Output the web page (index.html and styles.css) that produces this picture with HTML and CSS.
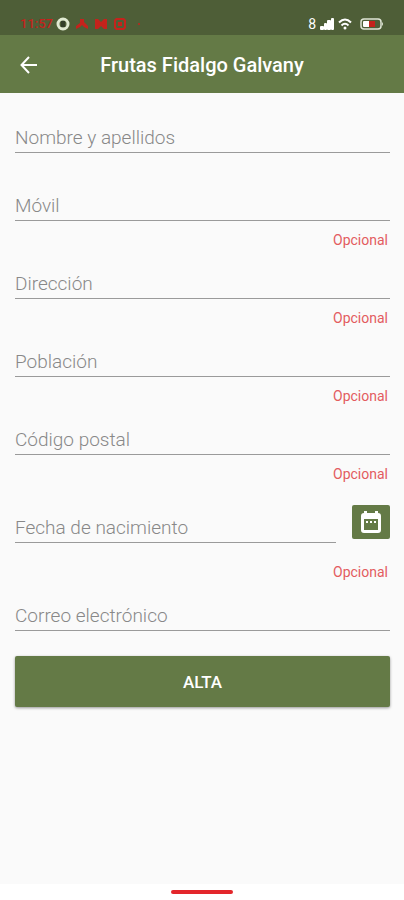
FILE: index.html
```html
<!DOCTYPE html>
<html lang="es">
  <head>
    <meta charset="utf-8">
    <meta name="viewport" content="width=device-width, initial-scale=1">
    <title>Frutas Fidalgo Galvany</title>
    <link rel="stylesheet" href="styles.css">
  </head>
  <body>
    <div class="statusbar">
      <div class="status-left">
        <span class="clock">11:57</span>
        <svg width="14" height="14" viewBox="0 0 14 14">
          <circle cx="7" cy="7" r="5" fill="#4e5e37" stroke="#e0ead2" stroke-width="3"/>
          <rect x="5" y="4" width="4" height="6" fill="#34402a"/>
        </svg>
        <svg class="red-icon" width="14" height="12" viewBox="0 0 14 12">
          <path d="M5 1h4v3l4 4v3l-4-2-2-2-2 2-4 2V8l4-3z"/>
        </svg>
        <svg class="red-icon" width="14" height="12" viewBox="0 0 14 12">
          <path d="M1 1h3l3 3 3-3h3v10h-3L7 8l-3 3H1z"/>
        </svg>
        <svg class="red-icon" width="14" height="12" viewBox="0 0 14 12">
          <path fill-rule="evenodd" d="M3 0h8l2 2v8l-2 2H3l-2-2V2zM4 2L3 3v6l1 1h6l1-1V3l-1-1zM5 4h4v4H5z"/>
        </svg>
        <svg class="red-icon" width="14" height="12" viewBox="0 0 14 12">
          <circle cx="7" cy="6" r="1"/>
        </svg>
      </div>
      <div class="status-right">
        <span class="network">8</span>
        <svg width="14" height="12" viewBox="0 0 14 12" fill="#fff">
          <rect x="0" y="8" width="4" height="4" rx="1"/>
          <rect x="4" y="5" width="3" height="7" rx="1"/>
          <rect x="7" y="2" width="4" height="10" rx="1"/>
          <rect x="11" y="0" width="3" height="12" rx="1"/>
        </svg>
        <svg width="14" height="12" viewBox="0 0 14 12" fill="none" stroke="#fff" stroke-width="2">
          <path d="M1 4.500Q7-1.500 13 4.500M3.500 7.500Q7 4 10.500 7.500"/>
          <circle cx="7" cy="10" r="1.500" fill="#fff" stroke="none"/>
        </svg>
        <svg class="battery" width="24" height="12" viewBox="0 0 24 12">
          <rect x="1" y="1" width="20" height="10" rx="3" fill="none" stroke="#dfe5d6" stroke-width="1.500"/>
          <path d="M22 4q2 2 0 4z" fill="#dfe5d6"/>
          <rect x="3" y="3" width="7" height="6" rx="1" fill="#fff"/>
          <rect x="9" y="3" width="6" height="6" fill="#c4231c"/>
        </svg>
      </div>
    </div>

    <header class="appbar">
      <button class="back" type="button" aria-label="Atrás">
        <svg width="18" height="18" viewBox="0 0 18 18" fill="none" stroke="#fff" stroke-width="2">
          <path d="M17 9H2M9 1L1.500 9 9 17"/>
        </svg>
      </button>
      <h1 class="title">Frutas Fidalgo Galvany</h1>
    </header>

    <main class="content">
      <form class="form">
        <div class="field field-required">
          <input class="input" type="text" id="nombre" placeholder="Nombre y apellidos" aria-label="Nombre y apellidos">
        </div>
        <div class="field">
          <input class="input" type="tel" id="movil" placeholder="Móvil" aria-label="Móvil">
          <span class="note">Opcional</span>
        </div>
        <div class="field">
          <input class="input" type="text" id="direccion" placeholder="Dirección" aria-label="Dirección">
          <span class="note">Opcional</span>
        </div>
        <div class="field">
          <input class="input" type="text" id="poblacion" placeholder="Población" aria-label="Población">
          <span class="note">Opcional</span>
        </div>
        <div class="field">
          <input class="input" type="text" id="postal" placeholder="Código postal" aria-label="Código postal">
          <span class="note">Opcional</span>
        </div>
        <div class="field field-date">
          <div class="date-row">
            <input class="input" type="text" id="fecha" placeholder="Fecha de nacimiento" aria-label="Fecha de nacimiento">
            <button class="calendar" type="button" aria-label="Elegir fecha">
              <svg width="20" height="22" viewBox="0 0 20 22">
                <path fill="#fff" fill-rule="evenodd" d="M3 0h3v2h8V0h3v2q3 0 3 3v14q0 3-3 3H3q-3 0-3-3V5q0-3 3-3zM3 8v11h14V8z"/>
                <path fill="#fff" d="M5 10h2v2H5zM9 10h2v2H9zM13 10h2v2h-2z"/>
              </svg>
            </button>
          </div>
          <span class="note">Opcional</span>
        </div>
        <div class="field">
          <input class="input" type="email" id="correo" placeholder="Correo electrónico" aria-label="Correo electrónico">
        </div>
        <button class="submit" type="submit">ALTA</button>
      </form>
    </main>

    <div class="navbar">
      <div class="handle"></div>
    </div>
  </body>
</html>
```

FILE: styles.css
```css
* {
  box-sizing: border-box;
}
body {
  margin: 0;
  min-height: 100vh;
  display: flex;
  flex-direction: column;
  font-family: Roboto, sans-serif;
  background-color: #fafafa;
}
svg {
  display: block;
}
.statusbar {
  height: 35px;
  padding: 12px 20px 0 20px;
  display: flex;
  align-items: center;
  justify-content: space-between;
  background-color: #4e5e37;
}
.status-left {
  display: flex;
  align-items: center;
  gap: 5px;
}
.clock {
  width: 31px;
  font-size: 13px;
  line-height: 16px;
  font-weight: 500;
  color: #c4231c;
}
.red-icon {
  fill: #c4231c;
}
.status-right {
  display: flex;
  align-items: center;
  gap: 4px;
}
.network {
  font-size: 14px;
  line-height: 16px;
  color: #fff;
}
.battery {
  margin-left: 4px;
}
.appbar {
  height: 58px;
  padding: 2px 16px 0;
  display: grid;
  grid-template-columns: 28px 1fr 28px;
  align-items: center;
  background-color: #647a46;
}
.back {
  padding: 4px;
  border: none;
  background: none;
}
.title {
  margin: 0;
  font-size: 20px;
  line-height: 24px;
  font-weight: 500;
  text-align: center;
  color: #fff;
}
.content {
  flex: 1;
  padding: 28px 14px 24px 15px;
}
.form {
  display: flex;
  flex-direction: column;
  gap: 18px;
}
.field {
  display: flex;
  flex-direction: column;
}
.field-required {
  margin-bottom: 18px;
}
.input {
  width: 100%;
  height: 32px;
  padding: 2px 0 0;
  border: none;
  border-bottom: 1px solid #9a9a9a;
  border-radius: 0;
  outline: none;
  background: none;
  font-family: inherit;
  font-size: 19px;
  font-weight: 300;
  color: #333;
}
.input::placeholder {
  color: #888;
  opacity: 1;
}
.note {
  margin-top: 10px;
  padding-right: 2px;
  font-size: 14px;
  line-height: 18px;
  text-align: right;
  color: #e35c5f;
}
.date-row {
  height: 42px;
  display: flex;
  align-items: center;
  gap: 16px;
}
.date-row .input {
  flex: 1;
  min-width: 0;
  align-self: flex-end;
}
.field-date .note {
  margin-top: 20px;
}
.calendar {
  width: 38px;
  height: 34px;
  padding: 0;
  display: flex;
  align-items: center;
  justify-content: center;
  border: none;
  border-radius: 2px;
  background-color: #647a46;
}
.submit {
  height: 51px;
  margin-top: 7px;
  border: none;
  border-radius: 2px;
  background-color: #647a46;
  box-shadow: 0 1px 3px rgba(0, 0, 0, 0.4);
  font-family: inherit;
  font-size: 17px;
  font-weight: 500;
  color: #fff;
}
.navbar {
  height: 16px;
  display: flex;
  align-items: center;
  justify-content: center;
  background-color: #fff;
}
.handle {
  width: 62px;
  height: 4px;
  border-radius: 2px;
  background-color: #e3262b;
}
```
